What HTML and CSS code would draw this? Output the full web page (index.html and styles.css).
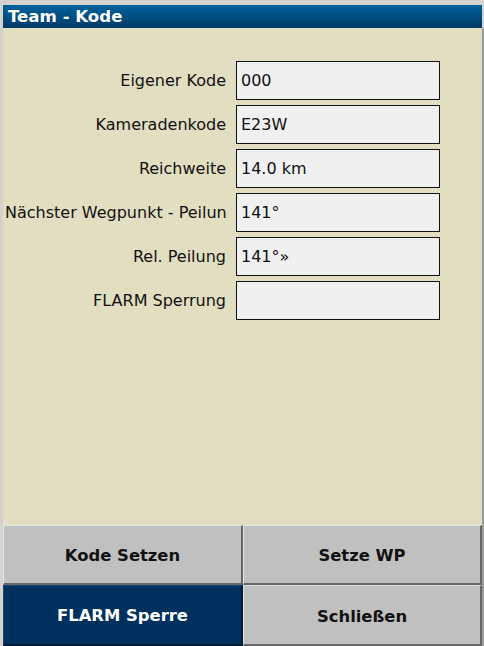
FILE: index.html
```html
<!DOCTYPE html>
<html>
<head>
<meta charset="utf-8">
<link rel="stylesheet" href="styles.css">
</head>
<body>
<div class="window">
  <div class="titlebar">Team - Kode</div>
  <div class="content">
    <div class="form">
      <div class="row"><div class="label">Eigener Kode</div><div class="field">000</div></div>
      <div class="row"><div class="label">Kameradenkode</div><div class="field">E23W</div></div>
      <div class="row"><div class="label">Reichweite</div><div class="field">14.0 km</div></div>
      <div class="row"><div class="label label-clip">Nächster Wegpunkt - Peilun</div><div class="field">141°</div></div>
      <div class="row"><div class="label">Rel. Peilung</div><div class="field">141°»</div></div>
      <div class="row"><div class="label">FLARM Sperrung</div><div class="field"></div></div>
    </div>
  </div>
  <div class="buttons">
    <div class="btn">Kode Setzen</div>
    <div class="btn">Setze WP</div>
    <div class="btn btn-active">FLARM Sperre</div>
    <div class="btn">Schließen</div>
  </div>
</div>
</body>
</html>
```
FILE: styles.css
```css
html, body {
  margin: 0;
  padding: 0;
}
body {
  width: 484px;
  height: 646px;
  background: #d6d2ce;
  font-family: "DejaVu Sans", sans-serif;
  overflow: hidden;
}
.window {
  margin: 5px 0 0 3px;
  width: 481px;
  height: 641px;
  display: flex;
  flex-direction: column;
}
.titlebar {
  height: 23px;
  line-height: 23px;
  margin-right: 2px;
  padding-left: 5px;
  background: linear-gradient(#00639e, #003a66);
  color: #fff;
  font-weight: bold;
  font-size: 16.6px;
}
.content {
  height: 497px;
  background: #e2dec1;
  border-right: 2px solid #9a9a9a;
}
.form {
  padding-top: 33px;
  display: flex;
  flex-direction: column;
  gap: 5px;
}
.row {
  display: flex;
  align-items: center;
  height: 39px;
}
.label {
  width: 223px;
  padding-right: 5px;
  text-align: right;
  font-size: 16px;
  color: #111;
  white-space: nowrap;
}
.label-clip {
  width: 226px;
  padding-left: 2px;
  padding-right: 0;
  text-align: left;
}
.field {
  margin-left: 5px;
  width: 198px;
  height: 37px;
  line-height: 37px;
  padding-left: 4px;
  border: 1px solid #111;
  background: #f0f0f0;
  font-size: 16px;
  color: #111;
  white-space: nowrap;
}
.buttons {
  display: grid;
  grid-template-columns: 240px 239px;
  grid-template-rows: 60px 61px;
  border-right: 2px solid #9a9a9a;
}
.btn {
  display: flex;
  align-items: center;
  justify-content: center;
  padding-top: 2px;
  background: #c0c0c0;
  border-top: 1px solid #e4e4e4;
  border-left: 1px solid #e4e4e4;
  border-right: 2px solid #666;
  border-bottom: 2px solid #666;
  font-weight: bold;
  font-size: 16.4px;
  color: #111;
}
.btn-active {
  background: #00305d;
  color: #fff;
  padding-top: 1px;
  border-top-color: #1a4a78;
  border-left-color: #1a4a78;
  border-right-color: #001a33;
  border-bottom-color: #001a33;
}
```
